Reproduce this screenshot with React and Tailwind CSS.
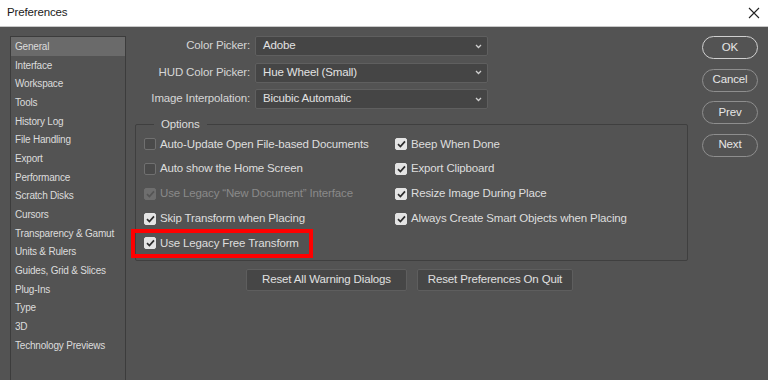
import React from 'react';

const SECTIONS = [
    'General', 'Interface', 'Workspace', 'Tools', 'History Log', 'File Handling', 'Export',
    'Performance', 'Scratch Disks', 'Cursors', 'Transparency & Gamut', 'Units & Rulers',
    'Guides, Grid & Slices', 'Plug-Ins', 'Type', '3D', 'Technology Previews'
];

const PICKERS = [
    { label: 'Color Picker:', value: 'Adobe' },
    { label: 'HUD Color Picker:', value: 'Hue Wheel (Small)' },
    { label: 'Image Interpolation:', value: 'Bicubic Automatic' }
];

const LEFT_OPTIONS = [
    { label: 'Auto-Update Open File-based Documents', checked: false },
    { label: 'Auto show the Home Screen', checked: false },
    { label: 'Use Legacy \u201cNew Document\u201d Interface', checked: true, disabled: true },
    { label: 'Skip Transform when Placing', checked: true },
    { label: 'Use Legacy Free Transform', checked: true, marked: true }
];

const RIGHT_OPTIONS = [
    { label: 'Beep When Done', checked: true },
    { label: 'Export Clipboard', checked: true },
    { label: 'Resize Image During Place', checked: true },
    { label: 'Always Create Smart Objects when Placing', checked: true }
];

function Checkbox({ checked, disabled }) {
    const box = disabled
        ? 'bg-[#6e6e6e] border-[#6e6e6e]'
        : checked
            ? 'bg-[#e4e4e4] border-[#e4e4e4]'
            : 'bg-[#4a4a4a] border-[#707070]';
    return (
        <span className={`w-[12px] h-[12px] rounded-[2px] border flex items-center justify-center shrink-0 ${box}`}>
            {checked && (
                <svg width="9" height="8" viewBox="0 0 9 8">
                    <path d="M1 4.2 L3.4 6.5 L8 1.4" fill="none" stroke={disabled ? '#555' : '#2c2c2c'} strokeWidth="1.7" />
                </svg>
            )}
        </span>
    );
}

function OptionRow({ label, checked, disabled, marked }) {
    return (
        <div className="relative h-[20px] flex items-center gap-[4px]">
            {marked && (
                <div className="absolute -left-[13px] -top-[4px] w-[182px] h-[29px] border-[4px] border-[#ff0000]" />
            )}
            <Checkbox checked={checked} disabled={disabled} />
            <span className={`whitespace-nowrap ${disabled ? 'text-[#8a8a8a]' : 'text-[#dedede]'}`}>{label}</span>
        </div>
    );
}

function RoundButton({ children, primary }) {
    return (
        <button className={`h-[23px] w-[56px] rounded-full border text-[11.5px] text-[#e6e6e6] ${primary ? 'border-[#d0d0d0]' : 'border-[#8e8e8e]'}`}>
            {children}
        </button>
    );
}

export default function App() {
    return (
        <div className="w-[768px] h-[380px] flex flex-col bg-[#535353] overflow-hidden text-[11.5px] tracking-[-0.15px]" style={{ fontFamily: '"Liberation Sans", Arial, sans-serif' }}>
            <div className="h-[27px] shrink-0 bg-white border-b border-[#c8c8c8] flex items-center justify-between pl-[7px] pr-[8px]">
                <span className="text-[11.5px] text-[#1a1a1a]">Preferences</span>
                <svg width="12" height="12" viewBox="0 0 12 12">
                    <path d="M1 1 L11 11 M11 1 L1 11" stroke="#222" strokeWidth="1.1" />
                </svg>
            </div>

            <div className="flex-1 flex min-h-0">
                {/* category list */}
                <div className="pl-[10px] pt-[9px] w-[126px] shrink-0">
                    <div className="h-full border border-b-0 border-[#3c3c3c]">
                        {SECTIONS.map((s, i) => (
                            <div key={s} className={`h-[18.7px] flex items-center pl-[4px] text-[10px] tracking-[-0.2px] whitespace-nowrap text-[#dcdcdc] ${i === 0 ? 'bg-[#6a6a6a]' : ''}`}>
                                {s}
                            </div>
                        ))}
                    </div>
                </div>

                {/* settings */}
                <div className="ml-[9px] w-[553px] pt-[9px] flex flex-col">
                    <div className="flex flex-col gap-[6.5px]">
                        {PICKERS.map(p => (
                            <div key={p.label} className="flex items-center gap-[5px]">
                                <span className="w-[115px] text-right text-[#d6d6d6]">{p.label}</span>
                                <div className="w-[233px] h-[20px] bg-[#454545] border border-[#5f5f5f] rounded-[2px] flex items-center justify-between pl-[7px] pr-[5px] text-[#e2e2e2]">
                                    <span>{p.value}</span>
                                    <svg width="7" height="5" viewBox="0 0 7 5">
                                        <path d="M1 1 L3.5 3.5 L6 1" fill="none" stroke="#cfcfcf" strokeWidth="1.3" />
                                    </svg>
                                </div>
                            </div>
                        ))}
                    </div>

                    <fieldset className="mt-[7px] h-[145px] border border-[#3f3f3f] rounded-[2px] pl-[8px] pt-[1px]">
                        <legend className="ml-[10px] px-[7px] text-[#dcdcdc]">Options</legend>
                        <div className="flex">
                            <div className="w-[251px] flex flex-col gap-[4.75px]">
                                {LEFT_OPTIONS.map(o => <OptionRow key={o.label} {...o} />)}
                            </div>
                            <div className="flex flex-col gap-[4.75px]">
                                {RIGHT_OPTIONS.map(o => <OptionRow key={o.label} {...o} />)}
                            </div>
                        </div>
                    </fieldset>

                    <div className="mt-[8px] flex justify-center gap-[10px] pr-[4px]">
                        <button className="h-[22px] w-[161px] bg-[#464646] border border-[#5e5e5e] rounded-[2px] text-[#e0e0e0]">Reset All Warning Dialogs</button>
                        <button className="h-[22px] w-[156px] bg-[#464646] border border-[#5e5e5e] rounded-[2px] text-[#e0e0e0]">Reset Preferences On Quit</button>
                    </div>
                </div>

                {/* dialog buttons */}
                <div className="ml-[14px] pt-[9px] flex flex-col gap-[9.5px]">
                    <RoundButton primary>OK</RoundButton>
                    <RoundButton>Cancel</RoundButton>
                    <RoundButton>Prev</RoundButton>
                    <RoundButton>Next</RoundButton>
                </div>
            </div>
        </div>
    );
}
